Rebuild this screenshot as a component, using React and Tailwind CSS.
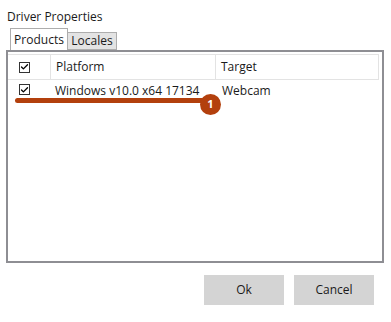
import { Check } from 'lucide-react';

function CheckBox() {
  return (
    <div className="w-[11px] h-[11px] border border-[#333] bg-white flex items-center justify-center">
      <Check size={10} strokeWidth={3.5} className="text-black" />
    </div>
  );
}

export default function App() {
  return (
    <div className="w-[391px] h-[322px] bg-white text-[12px] text-[#1a1a1a] font-['Open_Sans',sans-serif] relative">
      <div className="pl-[7px] pt-[9px] h-[28px] leading-[16px]">Driver Properties</div>

      {/* tabs */}
      <div className="flex items-end pl-[10px] h-[22px] relative z-10">
        <div className="h-[22px] w-[58px] border border-b-0 border-[#adadad] bg-white flex items-center justify-center pt-[1px]">
          Products
        </div>
        <div className="h-[18px] w-[49px] border border-l-0 border-[#adadad] bg-[#e3e3e3] flex items-center justify-center">
          Locales
        </div>
      </div>

      {/* panel */}
      <div className="ml-[6px] w-[378px] h-[213px] border-2 border-[#8e8e93] pt-[2px] pr-[3px]">
        <div className="flex h-[26px] border-t border-r border-b border-[#e3e3e3]">
          <div className="w-[43px] flex items-center pl-[11px] border-r border-[#e3e3e3]">
            <CheckBox />
          </div>
          <div className="w-[165px] flex items-center pl-[5px] border-r border-[#e3e3e3]">Platform</div>
          <div className="flex-1 flex items-center pl-[5px]">Target</div>
        </div>
        <div className="flex h-[22px]">
          <div className="w-[43px] flex items-center pl-[11px] pb-[3px]">
            <CheckBox />
          </div>
          <div className="w-[165px] flex items-center pl-[4px] whitespace-nowrap">Windows v10.0 x64 17134</div>
          <div className="flex-1 flex items-center pl-[6px]">Webcam</div>
        </div>
      </div>

      {/* callout */}
      <div className="absolute left-[15px] top-[98px] w-[192px] h-[5px] rounded-full bg-[#b3400d]" />
      <div className="absolute left-[200px] top-[94px] w-[21px] h-[21px] rounded-full bg-[#b3400d] text-white text-[11px] font-bold flex items-center justify-center">
        1
      </div>

      {/* buttons */}
      <div className="flex justify-end gap-[10px] pr-[17px] mt-[12px]">
        <button className="w-[80px] h-[30px] bg-[#d4d4d4] text-[#1a1a1a]">Ok</button>
        <button className="w-[80px] h-[30px] bg-[#d4d4d4] text-[#1a1a1a]">Cancel</button>
      </div>
    </div>
  );
}
